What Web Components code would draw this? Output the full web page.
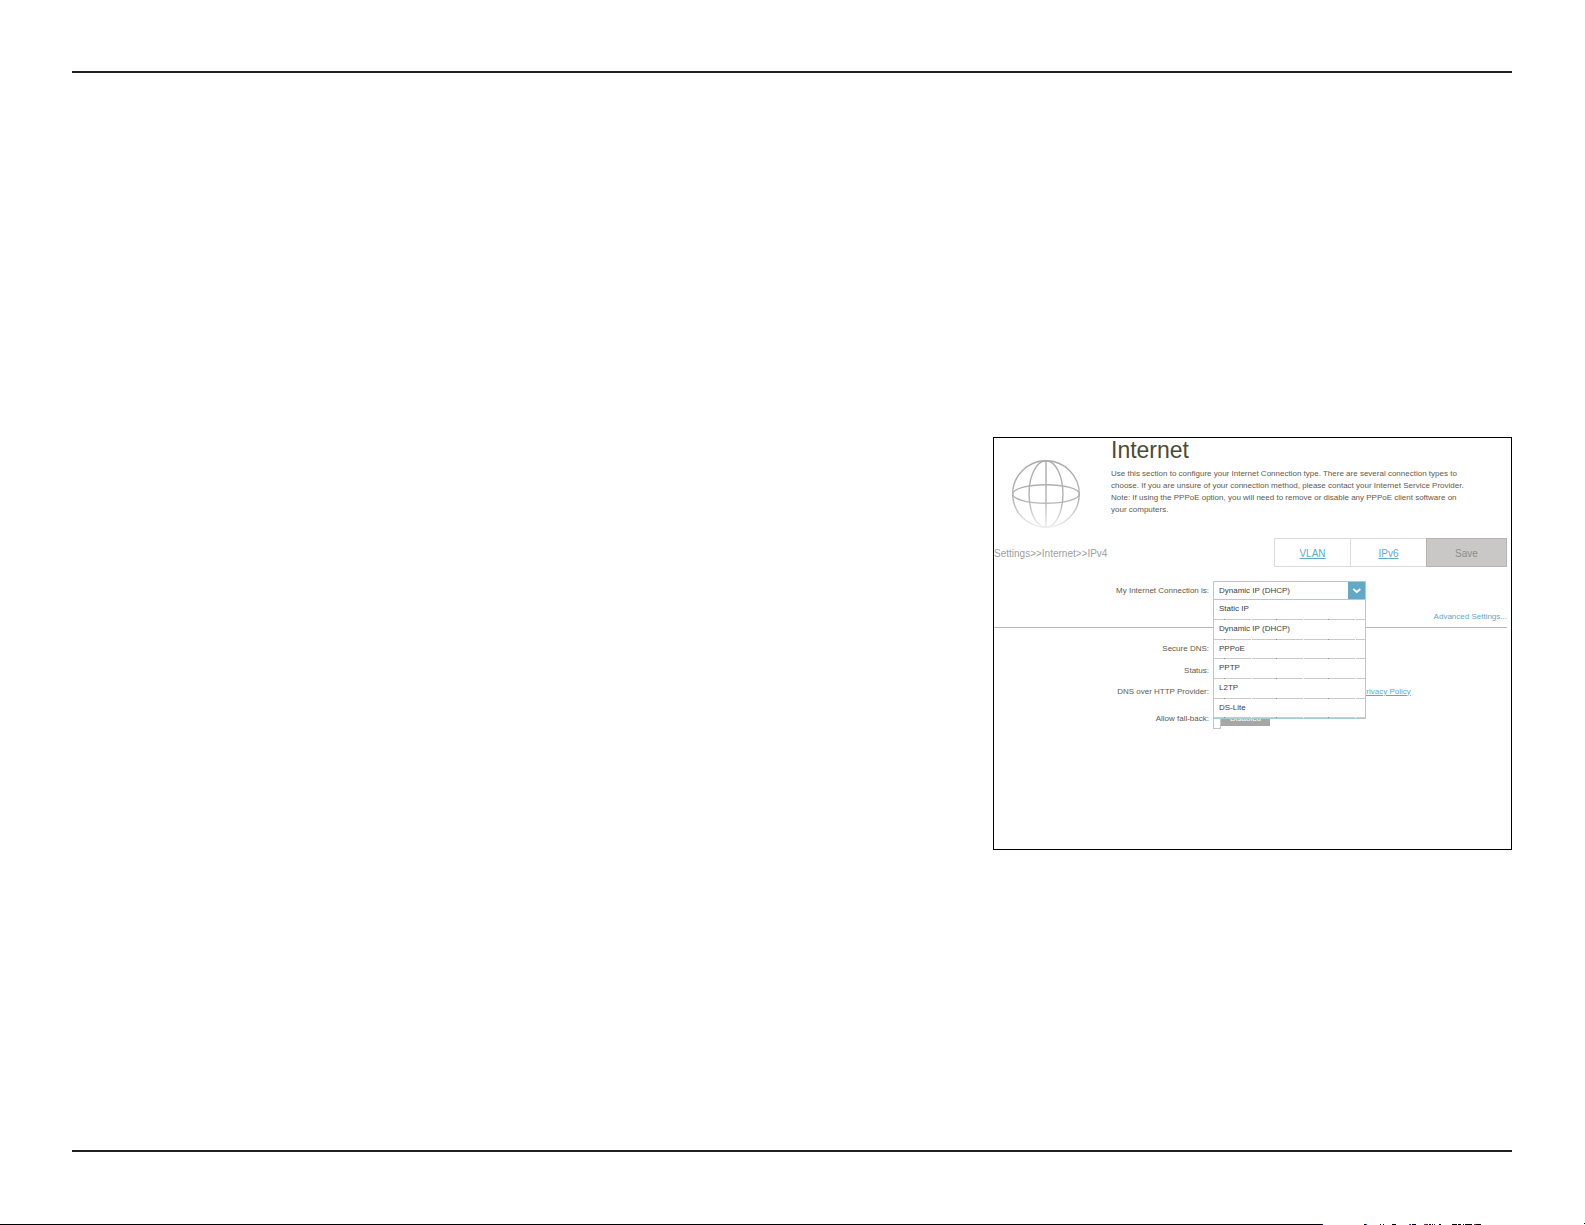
<!DOCTYPE html>
<html lang="en">
<head>
<meta charset="utf-8">
<title>Internet</title>
<style>
html,body{margin:0;background:#fff;font-family:"Liberation Sans",Arial,sans-serif}
</style>
</head>
<body>
<manual-page>
  <internet-panel></internet-panel>
</manual-page>
<script>
function define(name, html){
  const t=document.createElement('template');
  t.innerHTML=html;
  customElements.define(name,class extends HTMLElement{
    constructor(){super();this.attachShadow({mode:'open'}).append(t.content.cloneNode(true));}
  });
}

define('page-edge',`<style>
:host{display:block;line-height:0}
svg{display:block;width:100%;height:2px}
</style>
<svg shape-rendering="crispEdges" aria-hidden="true"><rect x="1584" width="1" height="1"/>
<g transform="translate(0 1)"><rect width="1322" height="1"/><rect x="1322" width="1" height="1" fill="#11b"/><rect x="1364" width="2" height="1"/><rect x="1366" width="1" height="1" fill="#26c"/><rect x="1380" width="1" height="1"/><rect x="1383" width="1" height="1"/><rect x="1392" width="4" height="1"/><rect x="1409" width="1" height="1" fill="#a33"/><rect x="1410" width="1" height="1" fill="#22b"/><rect x="1412" width="4" height="1"/><rect x="1424" width="2" height="1" fill="#a22"/><rect x="1426" width="2" height="1" fill="#22a"/><rect x="1429" width="2" height="1"/><rect x="1432" width="1" height="1"/><rect x="1434" width="1" height="1" fill="#226"/><rect x="1439" width="2" height="1"/><rect x="1452" width="5" height="1"/><rect x="1458" width="3" height="1"/><rect x="1463" width="1" height="1"/><rect x="1465" width="7" height="1"/><rect x="1474" width="2" height="1" fill="#922"/><rect x="1476" width="5" height="1"/></g>
</svg>`);

define('manual-page',`<style>
:host{display:flex;flex-direction:column;min-height:100vh;box-sizing:border-box}
.sheet{flex:1;display:flex;flex-direction:column;align-items:flex-end;margin:71px 73px 71px 72px;border:solid #231f20;border-width:2px 0}
.body{margin-top:364px}
</style>
<div class="sheet"><div class="body"><slot></slot></div></div>
<page-edge></page-edge>`);

define('globe-icon',`<style>:host{display:block}svg{display:block}</style>
<svg width="70" height="70" viewBox="0 0 70 70" fill="none" stroke="url(#g)" stroke-width="1.4" aria-hidden="true">
<defs><linearGradient id="g" gradientUnits="userSpaceOnUse" x1="0" y1="0" x2="0" y2="70"><stop offset="0" stop-color="#a9a9a9"/><stop offset=".6" stop-color="#b4b4b4"/><stop offset="1" stop-color="#f0f0f0"/></linearGradient></defs>
<circle cx="35" cy="35" r="33.3"/><ellipse cx="35" cy="35" rx="17" ry="33.3"/><ellipse cx="35" cy="35" rx="33.3" ry="9.3"/><path d="M34.3 1.7h1.4V68.3h-1.4z" fill="url(#g)" stroke="none"/></svg>`);

define('section-intro',`<style>
:host{display:flex;height:100px}
globe-icon{margin:21px 30px 0 17px}
h1{margin:0;font-size:23px;line-height:24px;font-weight:400;color:#4b4b35}
p{margin:6px 0 0;font-size:8px;line-height:12px;color:#5f5b4c;white-space:nowrap}
</style>
<globe-icon></globe-icon>
<div><h1>Internet</h1>
<p>Use this section to configure your Internet Connection type. There are several connection types to<br>choose. If you are unsure of your connection method, please contact your Internet Service Provider.<br>Note: If using the PPPoE option, you will need to remove or disable any PPPoE client software on<br>your computers.</p></div>`);

define('action-bar',`<style>
:host{display:flex;align-items:center;justify-content:space-between;font-size:10px;color:#a0a0a0}
nav{display:flex}
a,button{box-sizing:border-box;height:29px;width:76px;display:flex;align-items:center;justify-content:center;border:1px solid #dcdcdc;border-right:0;color:#62a9c6;font:inherit;padding:2px 0 0}
button{width:81px;background:#c9c8c7;border:1px solid #b4b4b4;color:#8d8d8d}
span{padding-top:2px}
</style>
<span>Settings&gt;&gt;Internet&gt;&gt;IPv4</span>
<nav><a href="#vlan">VLAN</a><a href="#ipv6">IPv6</a><button type="button">Save</button></nav>`);

define('field-row',`<style>
:host{display:grid;grid-template-columns:215px 1fr;column-gap:4px;align-items:center;height:var(--row,20px)}
.label{text-align:right}
</style>
<div class="label"><slot name="label"></slot></div><div><slot></slot></div>`);

define('connection-select',`<style>
:host{display:block;position:relative;width:153px;color:#404040}
select{display:block;appearance:none;box-sizing:border-box;width:100%;height:19px;margin:0;padding:0 5px;border:1px solid #a9ccd9;border-radius:0;background:#fff;font:inherit;color:inherit;outline:0}
svg{position:absolute;right:1px;top:1px;pointer-events:none}
ul{position:absolute;top:19px;left:0;right:0;z-index:2;margin:0;padding:0;list-style:none;background:#fff;border:solid #a9ccd9;border-width:0 1px 1px}
li{box-sizing:border-box;height:20px;padding-left:5px;line-height:18px;background:repeating-linear-gradient(90deg,#cacaca 0 10px,#8e8e8e 10px 11px,#cacaca 11px 37px,#fff 37px 38px,#cacaca 38px 52px) bottom/100% 1px no-repeat}
li:nth-child(3){height:19px}
li:last-child{height:19px}
</style>
<select aria-label="My Internet Connection is"><option>Dynamic IP (DHCP)</option></select>
<svg width="17" height="17" viewBox="0 0 17 17" aria-hidden="true"><path fill="#62a9c6" d="M0 0h17v17H0z"/><path d="M5.3 7l3.5 3 3.5-3" fill="none" stroke="#fff" stroke-width="1.8"/></svg>
<ul><li>Static IP</li><li>Dynamic IP (DHCP)</li><li>PPPoE</li><li>PPTP</li><li>L2TP</li><li>DS-Lite</li></ul>`);

define('toggle-switch',`<style>
:host{display:flex;color:#fff}
label{display:flex;height:22px}
input{appearance:none;box-sizing:border-box;width:8px;height:22px;margin:0;border:1px solid #c4c4c4;background:#fff}
span{height:19px;width:49px;line-height:24px;text-align:center;background:#a6a6a6}
</style>
<label><input type="checkbox"><span>Disabled</span></label>`);

define('internet-panel',`<style>
:host{display:block;box-sizing:border-box;width:519px;height:413px;border:1px solid #000;padding-right:4px;font-size:8px;color:#5f5b4c}
a{color:#62a9c6}
.adv{display:block;text-align:right;text-decoration:none;line-height:12px;margin-top:10px;padding-bottom:4px;border-bottom:1px solid #b8b8b8}
.first{--row:21px;margin-top:13px}
.dns{margin-top:9px;--row:22px}
.policy{margin-left:148px}
.provider{--row:20px}
.fall{--row:34px}
</style>
<section-intro></section-intro>
<action-bar></action-bar>
<field-row class="first"><span slot="label">My Internet Connection is:</span><connection-select></connection-select></field-row>
<a class="adv" href="#advanced">Advanced Settings...</a>
<div class="dns">
<field-row><span slot="label">Secure DNS:</span></field-row>
<field-row><span slot="label">Status:</span></field-row>
<field-row class="provider"><span slot="label">DNS over HTTP Provider:</span><a class="policy" href="#privacy">Privacy Policy</a></field-row>
<field-row class="fall"><span slot="label">Allow fall-back:</span><toggle-switch></toggle-switch></field-row>
</div>`);
</script>
</body>
</html>
